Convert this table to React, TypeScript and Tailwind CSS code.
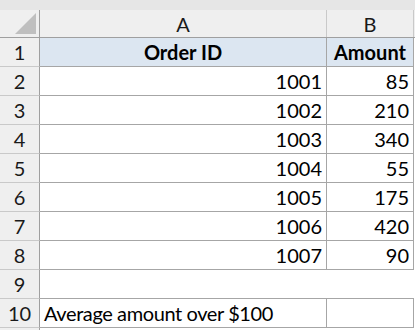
import React from "react";

const data: [string, string][] = [
  ["1001", "85"],
  ["1002", "210"],
  ["1003", "340"],
  ["1004", "55"],
  ["1005", "175"],
  ["1006", "420"],
  ["1007", "90"],
];

const font = { fontFamily: "Lato, 'Open Sans', sans-serif" };

function RowHead({ n }: { n: number }) {
  return (
    <div className="w-[40px] h-[29px] shrink-0 bg-[#efefef] border-r border-b border-r-[#9f9f9f] border-b-[#c9c9c9] flex items-center justify-center text-[20px] text-[#1a1a1a]">
      {n}
    </div>
  );
}

export default function App() {
  return (
    <div className="w-[415px] h-[330px] bg-white overflow-hidden" style={font}>
      <div className="h-[10px] bg-[#e6e6e6]" />
      <div className="flex h-[28px] bg-[#efefef] border-b border-[#9f9f9f]">
        <div className="w-[40px] shrink-0 border-r border-[#9f9f9f] relative">
          <div className="absolute right-[3px] bottom-[3px] w-0 h-0 border-l-[21px] border-l-transparent border-b-[21px] border-b-[#bfbfbf]" />
        </div>
        <div className="w-[287px] shrink-0 border-r border-[#c9c9c9] flex items-center justify-center text-[20px] text-[#1a1a1a]">
          A
        </div>
        <div className="w-[87px] shrink-0 border-r border-[#c9c9c9] flex items-center justify-center text-[20px] text-[#1a1a1a]">
          B
        </div>
        <div className="flex-1" />
      </div>
      <div className="flex h-[29px]">
        <RowHead n={1} />
        <div className="w-[287px] shrink-0 bg-[#dce6f1] border-r border-b border-[#a6a6a6] flex items-center justify-center text-[20px] font-bold text-black">
          Order ID
        </div>
        <div className="w-[87px] shrink-0 bg-[#dce6f1] border-r border-b border-[#a6a6a6] flex items-center justify-center text-[20px] font-bold text-black">
          Amount
        </div>
      </div>
      {data.map(([id, amt], i) => (
        <div key={id} className="flex h-[29px]">
          <RowHead n={i + 2} />
          <div className="w-[287px] shrink-0 border-r border-b border-[#a6a6a6] flex items-center justify-end pr-[4px] text-[20px] text-black">
            {id}
          </div>
          <div className="w-[87px] shrink-0 border-r border-b border-[#a6a6a6] flex items-center justify-end pr-[4px] text-[20px] text-black">
            {amt}
          </div>
        </div>
      ))}
      <div className="flex h-[29px]">
        <RowHead n={9} />
      </div>
      <div className="flex h-[29px]">
        <RowHead n={10} />
        <div className="w-[287px] shrink-0 border-t border-r border-b border-[#a6a6a6] -mt-px h-[30px] flex items-center pl-[4px] text-[20px] tracking-[-0.4px] text-black">
          Average amount over $100
        </div>
        <div className="w-[87px] shrink-0 border-t border-r border-b border-[#a6a6a6] -mt-px h-[30px]" />
      </div>
      <div className="flex h-[10px]">
        <div className="w-[40px] shrink-0 bg-[#efefef] border-r border-[#9f9f9f]" />
      </div>
    </div>
  );
}
